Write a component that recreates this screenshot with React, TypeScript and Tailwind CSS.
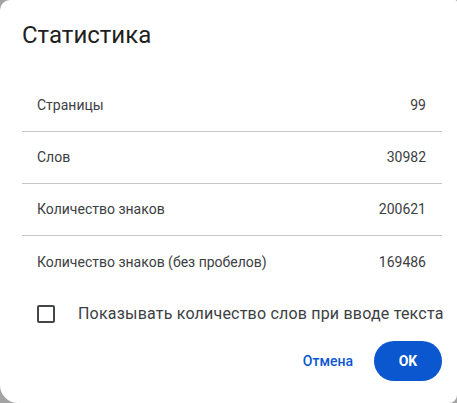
import React from "react";

const rows = [
  { label: "Страницы", value: "99" },
  { label: "Слов", value: "30982" },
  { label: "Количество знаков", value: "200621" },
  { label: "Количество знаков (без пробелов)", value: "169486" },
];

export default function App() {
  return (
    <div className="w-[457px] h-[403px] bg-[#a3a3a3] overflow-hidden">
      <div
        className="w-[457px] h-[403px] bg-white rounded-tl-[10px] rounded-bl-[18px] rounded-br-[8px] rounded-tr-[2px] flex flex-col"
        style={{ fontFamily: "Roboto, 'Noto Sans', sans-serif" }}
      >
        <div className="h-[80px] pl-[22px] pt-[19px]">
          <h1 className="text-[24px] leading-[32px] text-[#1f1f1f] font-normal">Статистика</h1>
        </div>
        <div className="ml-[22px] mr-[15px] flex flex-col">
          {rows.map((r, i) => (
            <div
              key={r.label}
              className={`h-[52px] pl-[15px] pr-[16px] flex items-center justify-between text-[14px] text-[#3c4043] ${
                i < rows.length - 1 ? "border-b border-[#c7c7c7]" : ""
              }`}
            >
              <span>{r.label}</span>
              <span>{r.value}</span>
            </div>
          ))}
        </div>
        <div className="mt-[10px] pl-[37px] flex items-center h-[32px]">
          <div className="w-[18px] h-[18px] border-2 border-[#444746] rounded-[2px]" />
          <span className="ml-[23px] text-[16px] tracking-[0.2px] text-[#3c4043]">
            Показывать количество слов при вводе текста
          </span>
        </div>
        <div className="mt-[11px] pr-[15px] flex items-center justify-end">
          <button className="mr-[21px] text-[14px] font-medium text-[#0b57d0]">Отмена</button>
          <button className="w-[68px] h-[40px] rounded-full bg-[#0b57d0] text-white text-[14px] font-bold">
            OK
          </button>
        </div>
      </div>
    </div>
  );
}
